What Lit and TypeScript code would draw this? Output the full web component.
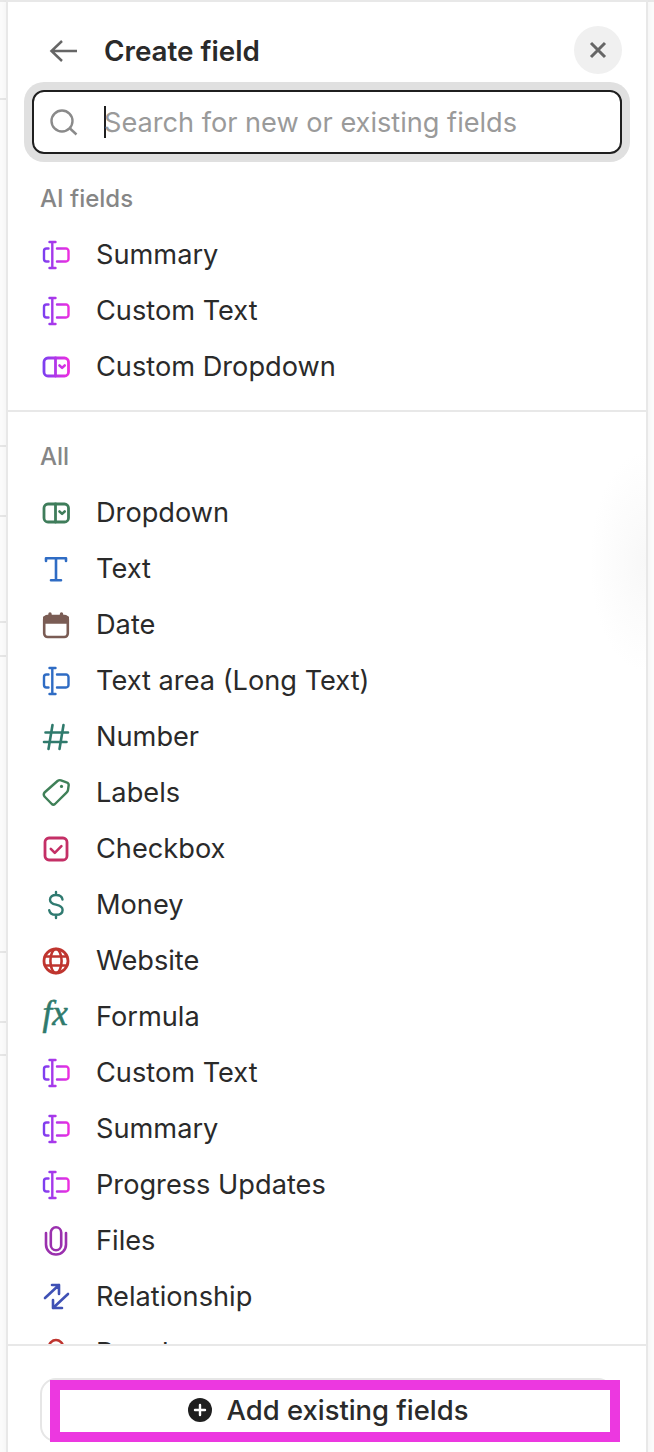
import {LitElement, html, css, svg} from 'lit';
import {customElement} from 'lit/decorators.js';
import {styleMap} from 'lit/directives/style-map.js';

const AI = 'url(#ai)';
const BLUE = '#2f6cc4';

const aiDefs = svg`<defs><linearGradient id="ai" gradientUnits="userSpaceOnUse" x1="3" y1="16" x2="29" y2="16">
  <stop offset="0" stop-color="#7a3ff0"></stop><stop offset="1" stop-color="#ee2ee0"></stop>
</linearGradient></defs>`;

const textArea = (c: string) => svg`
  <path d="M9.5 3h6M9.5 29h6M12.3 3v26" stroke=${c}></path>
  <path d="M8.5 9.5H6.5a2.5 2.5 0 0 0-2.5 2.5v8a2.5 2.5 0 0 0 2.5 2.5h2" stroke=${c}></path>
  <path d="M17 9.5h9a2.5 2.5 0 0 1 2.5 2.5v8a2.5 2.5 0 0 1-2.5 2.5h-9" stroke=${c}></path>`;

const dropdown = (c: string) => svg`
  <rect x="4" y="7" width="24.5" height="18" rx="4" stroke=${c} stroke-width="2.8"></rect>
  <path d="M15.5 7v18" stroke=${c} stroke-width="2.8"></path>
  <path d="M19.5 14.5l2.6 2.4 2.6-2.4" stroke=${c} stroke-width="2.6"></path>`;

const icons: Record<string, unknown> = {
  aiText: textArea(AI),
  aiDropdown: dropdown(AI),
  dropdown: dropdown('#3f7d5b'),
  text: svg`<path d="M6 8V5.2h20V8M16 5.2v22M11 27.2h10" stroke=${BLUE} stroke-width="2.6"></path>`,
  date: svg`
    <rect x="4.2" y="7" width="23.6" height="21" rx="3.5" stroke="#7a5c54" stroke-width="2.6"></rect>
    <path d="M4.2 8.5h23.6v5H4.2z" fill="#7a5c54" stroke="#7a5c54"></path>
    <path d="M10 5v3.5M21.5 5v3.5" stroke="#7a5c54" stroke-width="3.4"></path>`,
  long: textArea(BLUE),
  number: svg`<path d="M5.5 11.5h22.5M4 21h22.5M12.5 4L8.5 28M23.5 4l-4 24" stroke="#2f7a6c" stroke-width="2.6"></path>`,
  labels: svg`
    <path d="M4.5 15.5L17.5 4Q19 2.8 21 3.3L26.5 5.3Q28.7 6 28.7 8L28 13Q27.8 14.5 26.5 15.7L15 27Q13.3 28.3 11.8 27L4.5 19.5Q3 17.5 4.5 15.5z" stroke="#3f8058"></path>
    <circle cx="21.5" cy="9.4" r="1.6" fill="#3f8058"></circle>`,
  checkbox: svg`
    <rect x="5" y="5" width="22" height="22" rx="4" stroke="#c42f66" stroke-width="2.8"></rect>
    <path d="M10.8 15.8l4 4 6.6-6.6" stroke="#c42f66" stroke-width="2.6"></path>`,
  money: svg`<path d="M22.5 10.5C22 7.5 19.5 6 16 6c-3.6 0-6 1.7-6 4.7s2.5 4.2 6 5 6.6 2 6.6 5.2-2.8 4.9-6.6 4.9-6.2-1.5-6.8-4.6M16 3v3M16 26v3" stroke="#2f7a70"></path>`,
  website: svg`
    <circle cx="16" cy="16" r="12" stroke="#bf352f" stroke-width="2.8"></circle>
    <ellipse cx="16" cy="16" rx="5.6" ry="12" stroke="#bf352f" stroke-width="2.6"></ellipse>
    <path d="M5 11.5h22M5 20.5h22" stroke="#bf352f" stroke-width="2.6"></path>`,
  formula: svg`<text x="2.5" y="24" font-family="'Liberation Serif', serif" font-style="italic" font-size="35" fill="#2f7a6c" stroke="#2f7a6c" stroke-width="0.6">fx</text>`,
  files: svg`<path d="M6 8v11.5a10 10 0 0 0 20 0V8M10.8 20V7.5a5.2 5.2 0 0 1 10.4 0V20a5.2 5.2 0 0 1-10.4 0" stroke="#9a30ae" stroke-width="2.6"></path>`,
  relationship: svg`<path d="M5 17L19 4M12 4h7v9M28 13L13 27M13 19v8h9" stroke="#3f51b5" stroke-width="2.6"></path>`,
  people: svg`
    <circle cx="16" cy="10" r="7" stroke="#bf352f" stroke-width="2.6"></circle>
    <path d="M4 29c1-6 6-9 12-9s11 3 12 9" stroke="#bf352f"></path>`,
};

const aiFields = [
  {icon: 'aiText', label: 'Summary'},
  {icon: 'aiText', label: 'Custom Text'},
  {icon: 'aiDropdown', label: 'Custom Dropdown'},
];

const allFields = [
  {icon: 'dropdown', label: 'Dropdown'},
  {icon: 'text', label: 'Text'},
  {icon: 'date', label: 'Date'},
  {icon: 'long', label: 'Text area (Long Text)'},
  {icon: 'number', label: 'Number'},
  {icon: 'labels', label: 'Labels'},
  {icon: 'checkbox', label: 'Checkbox'},
  {icon: 'money', label: 'Money'},
  {icon: 'website', label: 'Website'},
  {icon: 'formula', label: 'Formula'},
  {icon: 'aiText', label: 'Custom Text'},
  {icon: 'aiText', label: 'Summary'},
  {icon: 'aiText', label: 'Progress Updates'},
  {icon: 'files', label: 'Files'},
  {icon: 'relationship', label: 'Relationship'},
  {icon: 'people', label: 'People'},
];

// table row lines of the page underneath, peeking out left of the panel
const backdropLines = [98, 445, 515, 621, 655, 951, 1021, 1054];

@customElement('app-root')
export class AppRoot extends LitElement {
  static override styles = css`
    :host {
      display: block;
      position: relative;
      width: 654px;
      height: 1452px;
      overflow: hidden;
      background: #fbfbfb;
      box-shadow: inset 0 2px 0 #e8e8e8;
      font-family: Inter, sans-serif;
      color: #2a2a2a;
    }

    .line {
      position: absolute;
      left: 0;
      width: 6px;
      height: 2px;
      background: #e6e6e6;
    }

    .panel {
      position: relative;
      display: flex;
      flex-direction: column;
      box-sizing: border-box;
      height: 1450px;
      margin: 2px 8px 0;
      padding-bottom: 8px;
      background: #fff;
      box-shadow: 0 0 0 2px #e8e8e8, 0 0 6px 2px rgba(0, 0, 0, 0.04);
    }

    .header {
      display: flex;
      align-items: center;
      flex: none;
      height: 48px;
      margin: 24px 24px 16px 40px;
    }

    .back {
      width: 32px;
      height: 32px;
      margin-right: 24px;
      fill: none;
      stroke: #666;
      stroke-width: 2.5;
    }

    .title {
      flex: 1;
      padding-top: 2px;
      font-size: 27.8px;
      font-weight: 600;
    }

    .close {
      display: flex;
      align-items: center;
      justify-content: center;
      width: 48px;
      height: 48px;
      border-radius: 50%;
      background: #f0f0f0;
    }

    .close svg {
      width: 20px;
      height: 20px;
      fill: none;
      stroke: #666;
      stroke-width: 3;
    }

    .search {
      display: flex;
      align-items: center;
      flex: none;
      box-sizing: border-box;
      height: 64px;
      margin: 0 24px;
      padding-left: 16px;
      border: 2px solid #1f1f1f;
      border-radius: 12px;
      box-shadow: 0 0 0 8px #e0e0e0;
    }

    .search svg {
      width: 30px;
      height: 30px;
      margin-right: 24px;
      fill: none;
      stroke: #8a8a8a;
      stroke-width: 2.4;
    }

    .caret {
      width: 2px;
      height: 32px;
      background: #1f1f1f;
    }

    .placeholder {
      margin-left: -2px;
      font-size: 27.15px;
      color: #9a9a9a;
    }

    .group {
      flex: none;
      padding: 29px 0 15px;
    }

    .group.all {
      flex: 1;
      min-height: 0;
      overflow: hidden;
      padding-bottom: 0;
      border-top: 2px solid #e8e8e8;
      background: radial-gradient(ellipse 56px 110px at 100% 150px, #f8f8f8, rgba(255, 255, 255, 0));
    }

    .caption {
      margin: 0 0 12px 32px;
      font-size: 24px;
      font-weight: 450;
      line-height: 32px;
      color: #868686;
    }

    .row {
      display: flex;
      align-items: center;
      height: 56px;
      padding-left: 32px;
      font-size: 27.2px;
      white-space: nowrap;
    }

    .row span {
      margin-top: -2px;
    }

    .row svg {
      flex: none;
      width: 32px;
      height: 32px;
      margin-right: 24px;
      fill: none;
      overflow: visible;
      stroke-width: 2.4;
      stroke-linecap: round;
      stroke-linejoin: round;
    }

    .footer {
      flex: none;
      padding: 32px 32px 2px;
      border-top: 2px solid #e8e8e8;
    }

    .add {
      position: relative;
      display: flex;
      align-items: center;
      justify-content: center;
      box-sizing: border-box;
      height: 64px;
      padding-left: 2px;
      border: 2px solid #e6e6e6;
      border-radius: 16px;
      font-size: 27.4px;
      font-weight: 500;
    }

    .add svg {
      width: 24px;
      height: 24px;
      margin-right: 15px;
    }

    .highlight {
      position: absolute;
      left: 8px;
      top: 0;
      box-sizing: border-box;
      width: 570px;
      height: 62px;
      border: 10px solid #ec38e0;
    }
  `;

  private renderRow(f: {icon: string; label: string}) {
    return html`
      <div class="row">
        <svg viewBox="0 0 32 32">${aiDefs}${icons[f.icon]}</svg>
        <span>${f.label}</span>
      </div>
    `;
  }

  override render() {
    return html`
      ${backdropLines.map((y) => html`<div class="line" style=${styleMap({top: `${y}px`})}></div>`)}
      <div class="panel">
        <div class="header">
          <svg class="back" viewBox="0 0 32 32"><path d="M29 17H3.5M14 7L3.5 17L14 27"></path></svg>
          <span class="title">Create field</span>
          <div class="close">
            <svg viewBox="0 0 20 20"><path d="M3 3l14 14M17 3L3 17"></path></svg>
          </div>
        </div>
        <div class="search">
          <svg viewBox="0 0 30 30"><circle cx="12" cy="14" r="10.5"></circle><path d="M20 21.5L26.5 27.5"></path></svg>
          <div class="caret"></div>
          <span class="placeholder">Search for new or existing fields</span>
        </div>
        <div class="group">
          <div class="caption">AI fields</div>
          ${aiFields.map((f) => this.renderRow(f))}
        </div>
        <div class="group all">
          <div class="caption">All</div>
          ${allFields.map((f) => this.renderRow(f))}
        </div>
        <div class="footer">
          <div class="add">
            <svg viewBox="0 0 24 24">
              <circle cx="12" cy="12" r="12" fill="#1f1f1f"></circle>
              <path d="M12 7v10M7 12h10" stroke="#fff" stroke-width="2.4" stroke-linecap="round"></path>
            </svg>
            <span>Add existing fields</span>
            <div class="highlight"></div>
          </div>
        </div>
      </div>
    `;
  }
}
